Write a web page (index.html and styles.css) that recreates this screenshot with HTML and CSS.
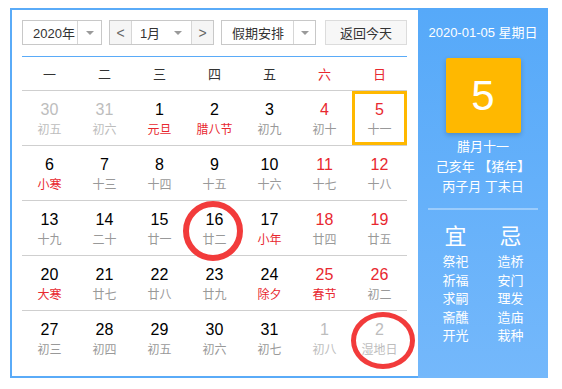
FILE: index.html
```html
<!DOCTYPE html>
<html lang="zh">
<head>
<meta charset="utf-8">
<link rel="stylesheet" href="styles.css">
</head>
<body>
<div class="cal">
  <div class="cal-main">
    <div class="controls">
      <div class="sel sel-year"><span class="sel-text">2020年</span><span class="sel-arrow"><i class="caret"></i></span></div>
      <div class="sel sel-month"><span class="nav">&lt;</span><span class="sel-text">1月</span><span class="m-caret"><i class="caret"></i></span><span class="nav nav-r">&gt;</span></div>
      <div class="sel sel-hol"><span class="sel-text">假期安排</span><span class="sel-arrow"><i class="caret"></i></span></div>
      <div class="btn">返回今天</div>
    </div>
    <div class="week">
      <span>一</span><span>二</span><span>三</span><span>四</span><span>五</span><span class="red">六</span><span class="red">日</span>
    </div>
    <div class="grid">
      <div class="row">
        <div class="cell other"><b>30</b><em>初五</em></div>
        <div class="cell other"><b>31</b><em>初六</em></div>
        <div class="cell"><b>1</b><em class="red">元旦</em></div>
        <div class="cell"><b>2</b><em class="red">腊八节</em></div>
        <div class="cell"><b>3</b><em>初九</em></div>
        <div class="cell"><b class="red">4</b><em>初十</em></div>
        <div class="cell today"><b class="red">5</b><em>十一</em></div>
      </div>
      <div class="row">
        <div class="cell"><b>6</b><em class="red">小寒</em></div>
        <div class="cell"><b>7</b><em>十三</em></div>
        <div class="cell"><b>8</b><em>十四</em></div>
        <div class="cell"><b>9</b><em>十五</em></div>
        <div class="cell"><b>10</b><em>十六</em></div>
        <div class="cell"><b class="red">11</b><em>十七</em></div>
        <div class="cell"><b class="red">12</b><em>十八</em></div>
      </div>
      <div class="row">
        <div class="cell"><b>13</b><em>十九</em></div>
        <div class="cell"><b>14</b><em>二十</em></div>
        <div class="cell"><b>15</b><em>廿一</em></div>
        <div class="cell"><b>16</b><em>廿二</em><span class="ring ring-a"></span></div>
        <div class="cell"><b>17</b><em class="red">小年</em></div>
        <div class="cell"><b class="red">18</b><em>廿四</em></div>
        <div class="cell"><b class="red">19</b><em>廿五</em></div>
      </div>
      <div class="row">
        <div class="cell"><b>20</b><em class="red">大寒</em></div>
        <div class="cell"><b>21</b><em>廿七</em></div>
        <div class="cell"><b>22</b><em>廿八</em></div>
        <div class="cell"><b>23</b><em>廿九</em></div>
        <div class="cell"><b>24</b><em class="red">除夕</em></div>
        <div class="cell"><b class="red">25</b><em class="red">春节</em></div>
        <div class="cell"><b class="red">26</b><em>初二</em></div>
      </div>
      <div class="row last">
        <div class="cell"><b>27</b><em>初三</em></div>
        <div class="cell"><b>28</b><em>初四</em></div>
        <div class="cell"><b>29</b><em>初五</em></div>
        <div class="cell"><b>30</b><em>初六</em></div>
        <div class="cell"><b>31</b><em>初七</em></div>
        <div class="cell other"><b>1</b><em>初八</em></div>
        <div class="cell other"><b>2</b><em>湿地日</em><span class="ring ring-b"></span></div>
      </div>
    </div>
  </div>
  <div class="cal-side">
    <div class="side-date">2020-01-05 星期日</div>
    <div class="side-day">5</div>
    <div class="side-lunar">
      <div>腊月十一</div>
      <div>己亥年 【猪年】</div>
      <div>丙子月 丁未日</div>
    </div>
    <div class="side-line"></div>
    <div class="yj">
      <div class="yj-col">
        <div class="yj-title">宜</div>
        <div>祭祀</div><div>祈福</div><div>求嗣</div><div>斋醮</div><div>开光</div>
      </div>
      <div class="yj-col">
        <div class="yj-title">忌</div>
        <div>造桥</div><div>安门</div><div>理发</div><div>造庙</div><div>栽种</div>
      </div>
    </div>
  </div>
</div>
</body>
</html>
```

FILE: styles.css
```css
* { box-sizing: border-box; }
body {
  margin: 0;
  background: #fff;
  font-family: "Liberation Sans", Arial, "Noto Sans CJK SC", sans-serif;
  color: #333;
}
.cal {
  display: flex;
  margin: 8px 0 0 10px;
  width: 538px;
  height: 370px;
}
.cal-main {
  width: 408px;
  border: 2px solid #5aabf8;
  border-right: 0;
  padding: 10px 11px 0 10px;
}
.controls {
  display: flex;
  height: 25px;
  font-size: 13px;
}
.sel {
  display: flex;
  border: 1px solid #c8c8c8;
  background: #fff;
  height: 25px;
  align-items: stretch;
}
.sel-text {
  display: flex;
  align-items: center;
  color: #333;
}
.sel-year { width: 80px; }
.sel-year .sel-text { width: 54px; padding-left: 10px; }
.sel-arrow {
  flex: 1;
  border-left: 1px solid #d6d6d6;
  display: flex;
  align-items: center;
  justify-content: center;
}
.caret {
  width: 0; height: 0;
  border-left: 4px solid transparent;
  border-right: 4px solid transparent;
  border-top: 4px solid #9a9a9a;
}
.sel-month { width: 105px; margin-left: 7px; }
.nav {
  width: 22px;
  background: #f5f5f5;
  border-right: 1px solid #d6d6d6;
  display: flex;
  align-items: center;
  justify-content: center;
  color: #666;
  font-size: 14px;
}
.nav-r { border-right: 0; border-left: 1px solid #d6d6d6; }
.sel-month .sel-text { width: 32px; justify-content: center; padding-left: 4px; }
.m-caret { flex: 1; display: flex; align-items: center; justify-content: center; }
.sel-hol { width: 95px; margin-left: 7px; }
.sel-hol .sel-text { width: 71px; padding-left: 10px; }
.btn {
  width: 82px;
  margin-left: 9px;
  border: 1px solid #dcdcdc;
  background: #f7f7f7;
  display: flex;
  align-items: center;
  justify-content: center;
  color: #333;
}
.week {
  margin-top: 11px;
  border-top: 1px solid #5aabf8;
  border-bottom: 1px solid #cfcfcf;
  height: 35px;
  display: grid;
  grid-template-columns: repeat(7, 55px);
  align-items: center;
  font-size: 13px;
  color: #333;
  font-family: "Noto Sans CJK SC", sans-serif;
}
.week span { text-align: center; }
.red { color: #e8282f !important; }
.row {
  display: grid;
  grid-template-columns: repeat(7, 55px);
  height: 55px;
  border-bottom: 1px solid #cfcfcf;
}
.row.last { border-bottom: 0; }
.cell {
  position: relative;
  display: flex;
  flex-direction: column;
  align-items: center;
  padding-top: 9px;
}
.cell b {
  font-weight: normal;
  font-size: 16px;
  line-height: 20px;
  color: #000;
}
.cell em {
  font-style: normal;
  font-size: 12px;
  line-height: 18px;
  color: #999;
  font-family: "Noto Sans CJK SC", sans-serif;
}
.cell.other b, .cell.other em { color: #bdbdbd; }
.cell.today { box-shadow: inset 0 0 0 3px #ffb800; }
.ring {
  position: absolute;
  border: 6px solid #f23b3b;
  border-radius: 50%;
}
.ring-a { width: 60px; height: 60px; left: -4px; top: 0; }
.ring-b { width: 64px; height: 57px; left: -1px; top: 1px; border-width: 5px; }
.cal-side {
  width: 130px;
  background: linear-gradient(#56a9f9, #74b8fb);
  color: #fff;
  text-align: center;
  padding-top: 15px;
  font-size: 13px;
}
.side-date { line-height: 20px; }
.side-day {
  width: 75px;
  height: 75px;
  margin: 15px auto 0;
  background: #ffb800;
  border-radius: 2px;
  box-shadow: 0 2px 5px rgba(0,0,0,0.2);
  font-size: 42px;
  line-height: 75px;
}
.side-lunar { margin-top: 4px; line-height: 20px; }
.side-line {
  margin: 11px 10px 0;
  height: 2px;
  background: rgba(255,255,255,0.35);
}
.yj {
  display: grid;
  grid-template-columns: 55px 55px;
  justify-content: center;
  margin-top: 13px;
  line-height: 18.5px;
}
.yj-title { font-size: 22px; line-height: 28px; margin-bottom: 2px; }
```
